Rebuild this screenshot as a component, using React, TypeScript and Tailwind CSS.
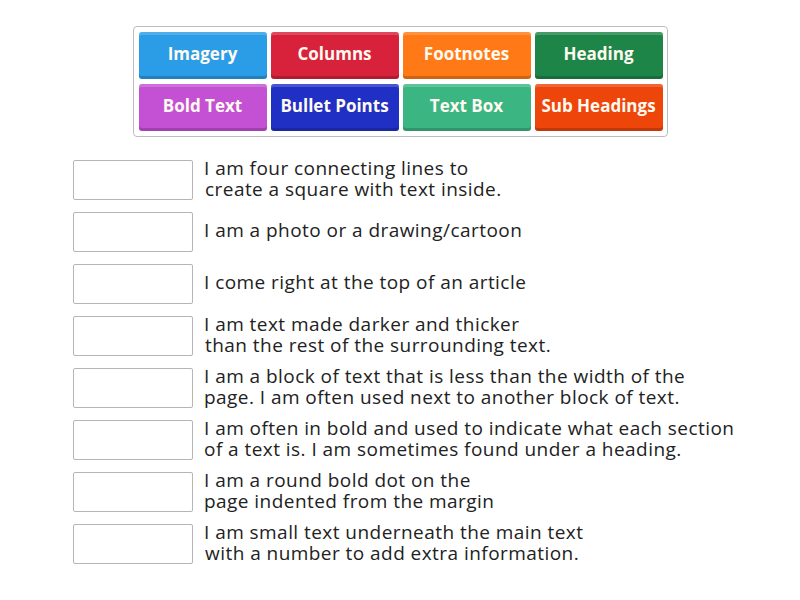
import React from "react";

const buttons = [
  { label: "Imagery", bg: "bg-[#2a9de6]" },
  { label: "Columns", bg: "bg-[#d8213b]" },
  { label: "Footnotes", bg: "bg-[#ff7a17]" },
  { label: "Heading", bg: "bg-[#1e8549]" },
  { label: "Bold Text", bg: "bg-[#c451d4]" },
  { label: "Bullet Points", bg: "bg-[#2130c4]" },
  { label: "Text Box", bg: "bg-[#3bb683]" },
  { label: "Sub Headings", bg: "bg-[#ee450b]" },
];

const rows: string[][] = [
  ["I am four connecting lines to", "create a square with text inside."],
  ["I am a photo or a drawing/cartoon"],
  ["I come right at the top of an article"],
  ["I am text made darker and thicker", "than the rest of the surrounding text."],
  ["I am a block of text that is less than the width of the", "page. I am often used next to another block of text."],
  ["I am often in bold and used to indicate what each section", "of a text is. I am sometimes found under a heading."],
  ["I am a round bold dot on the", "page indented from the margin"],
  ["I am small text underneath the main text", "with a number to add extra information."],
];

const indented = new Set([0, 3, 7]);

export default function App() {
  return (
    <div className="w-[800px] h-[600px] bg-white font-['Open_Sans',sans-serif] text-[#222]">
      <div className="pt-[26px] flex justify-center">
        <div className="w-[535px] border border-[#bdbdbd] rounded-[4px] pl-[5px] pr-[4px] py-[5px] grid grid-cols-4 gap-x-[4px] gap-y-[5px]">
          {buttons.map((b) => (
            <div
              key={b.label}
              className={`${b.bg} h-[47px] pb-[4px] rounded-[3px] flex items-center justify-center text-[17px] font-bold text-[#fffaf0] whitespace-nowrap shadow-[inset_0_3px_0_rgba(255,255,255,0.18),inset_0_-3px_0_rgba(0,0,0,0.18)]`}
            >
              {b.label}
            </div>
          ))}
        </div>
      </div>
      <div className="pt-[23px] pl-[73px] flex flex-col gap-[12px]">
        {rows.map((lines, i) => (
          <div key={i} className="flex items-center h-[40px]">
            <div className="w-[120px] h-[40px] border border-[#b5b5b5] rounded-[2px] bg-white shrink-0" />
            <div className="ml-[11px] mb-[3px] text-[19px] leading-[21px] tracking-[0.45px] whitespace-nowrap">
              {lines.map((l, j) => (
                <div key={j} className={j === 1 && indented.has(i) ? "pl-[1px]" : ""}>
                  {l}
                </div>
              ))}
            </div>
          </div>
        ))}
      </div>
    </div>
  );
}
